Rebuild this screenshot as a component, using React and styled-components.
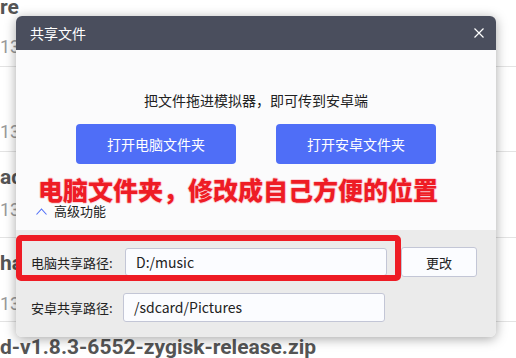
import React from "react";
import styled, { createGlobalStyle } from "styled-components";

const GlobalStyle = createGlobalStyle`
  html, body {
    margin: 0;
    padding: 0;
    background: #fff;
  }
  body {
    font-family: "Noto Sans CJK SC", "Noto Sans", sans-serif;
  }
`;

const Screen = styled.div`
  position: relative;
  width: 516px;
  height: 358px;
  overflow: hidden;
  background: #fff;
`;

// 后面被遮住的文件列表
const FileList = styled.div`
  margin-top: -18px;
  font-family: Roboto, "Liberation Sans", sans-serif;
`;

const FileRow = styled.div`
  box-sizing: border-box;
  height: ${(p) => p.$h}px;
  padding-top: 13px;
  border-bottom: 1px solid #e3e3e3;
  display: flex;
  flex-direction: column;
`;

const FileName = styled.div`
  height: 24px;
  line-height: 24px;
  font-size: 21px;
  font-weight: 700;
  color: #555;
  white-space: nowrap;
`;

const FileMeta = styled.div`
  margin-top: ${(p) => p.$gap}px;
  height: 24px;
  line-height: 24px;
  font-size: 18px;
  color: #9a9a9a;
  white-space: nowrap;
`;

const Dialog = styled.div`
  position: absolute;
  left: 16px;
  top: 16px;
  width: 480px;
  height: 321px;
  border-radius: 6px;
  overflow: hidden;
  background: #fbfbfc;
  box-shadow: 0 2px 12px rgba(0, 0, 0, 0.35);
  display: flex;
  flex-direction: column;
`;

const Header = styled.div`
  height: 34px;
  flex-shrink: 0;
  background: #4a4e5d;
  display: flex;
  align-items: center;
  justify-content: space-between;
  padding: 0 12px 0 14px;
`;

const Title = styled.div`
  color: #fff;
  font-size: 14px;
`;

const CloseButton = styled.div`
  width: 10px;
  height: 10px;
  display: flex;
`;

const Body = styled.div`
  height: 180px;
  flex-shrink: 0;
  display: flex;
  flex-direction: column;
  align-items: center;
  padding-top: 40px;
  box-sizing: border-box;
`;

const Hint = styled.div`
  font-size: 14px;
  line-height: 20px;
  color: #222;
`;

const ButtonRow = styled.div`
  margin-top: 14px;
  display: flex;
  gap: 40px;
`;

const PrimaryButton = styled.button`
  width: 160px;
  height: 40px;
  border: none;
  border-radius: 4px;
  background: #4f6ef7;
  color: #fff;
  font-family: inherit;
  font-size: 14px;
  padding: 0;
`;

const Advanced = styled.div`
  align-self: flex-start;
  margin-top: 38px;
  padding-left: 20px;
  display: flex;
  align-items: center;
  gap: 7px;
  font-size: 13px;
  line-height: 18px;
  color: #222;
`;

const Settings = styled.div`
  flex: 1;
  background: #ebebeb;
  padding: 17px 0 0 15px;
  display: flex;
  flex-direction: column;
  gap: 15px;
`;

const PathRow = styled.div`
  display: flex;
  align-items: center;
  height: 30px;
`;

const PathLabel = styled.div`
  width: ${(p) => p.$w}px;
  font-size: 13px;
  color: #222;
`;

const PathInput = styled.div`
  box-sizing: border-box;
  width: 262px;
  height: ${(p) => p.$h}px;
  border: 1px solid #c3c6d6;
  border-radius: 3px;
  background: #fbfcff;
  padding-left: 10px;
  display: flex;
  align-items: center;
  font-size: 14px;
  color: #222;
`;

const PlainButton = styled.button`
  margin-left: 14px;
  width: 76px;
  height: 30px;
  border: 1px solid #c3c6d6;
  border-radius: 3px;
  background: #fbfcff;
  font-family: inherit;
  font-size: 13px;
  color: #222;
  padding: 0;
`;

// 截图上的红色标注
const Annotation = styled.div`
  position: absolute;
  left: 22px;
  top: 158px;
  font-size: 25px;
  font-weight: 900;
  line-height: 30px;
  color: #ee1c25;
  white-space: nowrap;
  text-shadow: 1px 0 0 #fbd3da, -1px 0 0 #fbd3da, 0 1px 0 #fbd3da, 0 -1px 0 #fbd3da;
`;

const AnnotationBox = styled.div`
  position: absolute;
  left: 0;
  top: 219px;
  box-sizing: border-box;
  width: 385px;
  height: 46px;
  border: 6px solid #ee1c25;
  border-radius: 5px;
`;

const files = [
  { name: "re", meta: "13", h: 85, gap: 16 },
  { name: "", meta: "13", h: 85, gap: 16 },
  { name: "ad", meta: "13", h: 86, gap: 9 },
  { name: "ha", meta: "13", h: 84, gap: 17 },
  { name: "d-v1.8.3-6552-zygisk-release.zip", meta: "", h: 84, gap: 16 },
];

function App() {
  return (
    <Screen>
      <GlobalStyle />
      <FileList>
        {files.map((f, i) => (
          <FileRow key={i} $h={f.h}>
            <FileName>{f.name}</FileName>
            <FileMeta $gap={f.gap}>{f.meta}</FileMeta>
          </FileRow>
        ))}
      </FileList>

      <Dialog>
        <Header>
          <Title>共享文件</Title>
          <CloseButton>
            <svg width="10" height="10" viewBox="0 0 10 10">
              <path d="M0.5 0.5 L9.5 9.5 M9.5 0.5 L0.5 9.5" stroke="#fff" strokeWidth="1.2" />
            </svg>
          </CloseButton>
        </Header>
        <Body>
          <Hint>把文件拖进模拟器，即可传到安卓端</Hint>
          <ButtonRow>
            <PrimaryButton>打开电脑文件夹</PrimaryButton>
            <PrimaryButton>打开安卓文件夹</PrimaryButton>
          </ButtonRow>
          <Advanced>
            <svg width="11" height="7" viewBox="0 0 11 7">
              <path d="M0.5 6.5 L5.5 1 L10.5 6.5" fill="none" stroke="#4f6ef7" strokeWidth="1.1" />
            </svg>
            高级功能
          </Advanced>
        </Body>
        <Settings>
          <PathRow>
            <PathLabel $w={94}>电脑共享路径:</PathLabel>
            <PathInput $h={28}>D:/music</PathInput>
            <PlainButton>更改</PlainButton>
          </PathRow>
          <PathRow>
            <PathLabel $w={92}>安卓共享路径:</PathLabel>
            <PathInput $h={29}>/sdcard/Pictures</PathInput>
          </PathRow>
        </Settings>
        <Annotation>电脑文件夹，修改成自己方便的位置</Annotation>
        <AnnotationBox />
      </Dialog>
    </Screen>
  );
}

export default App;
